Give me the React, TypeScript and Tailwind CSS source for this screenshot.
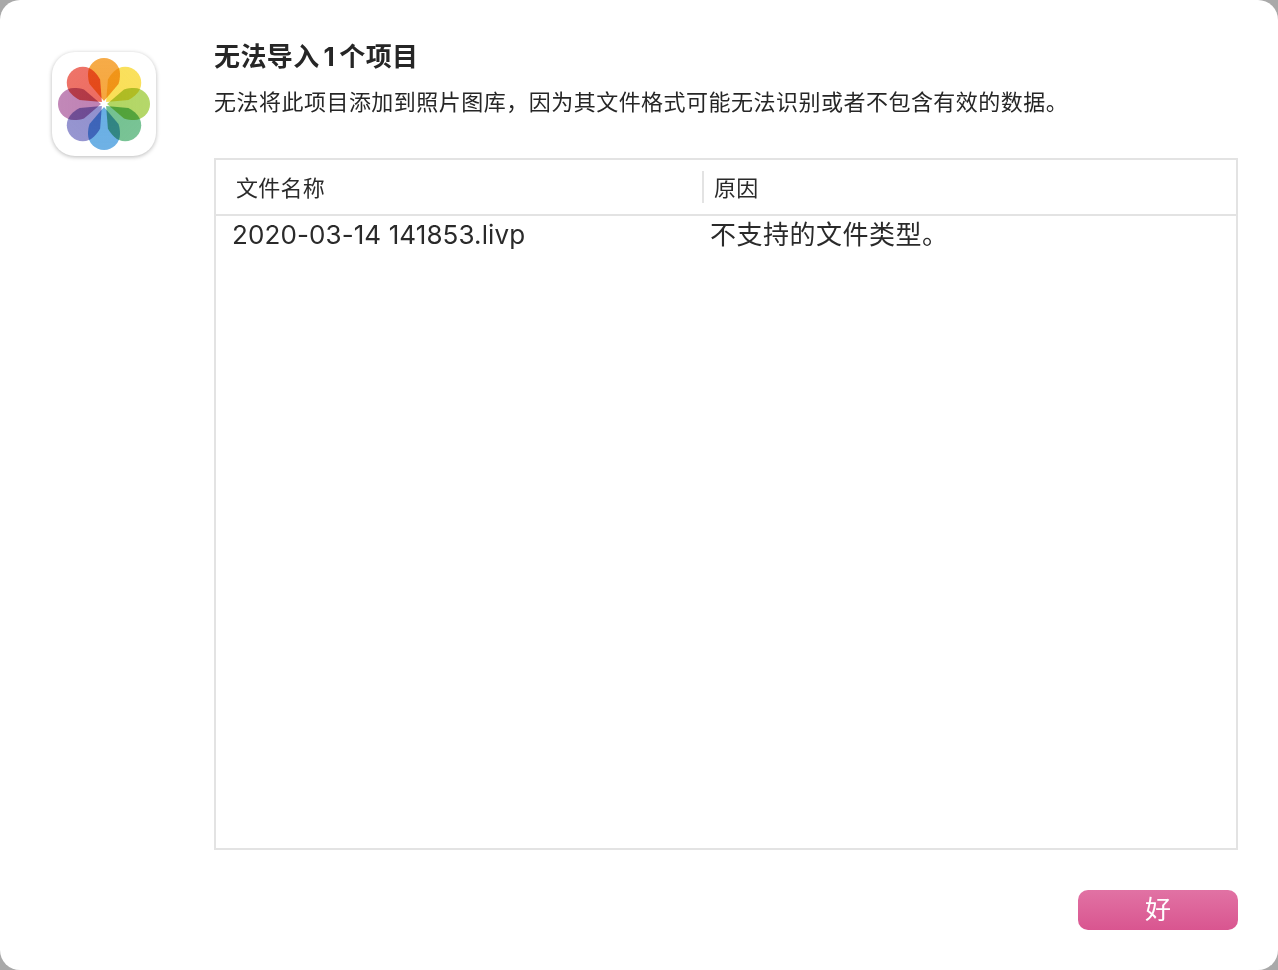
import React from 'react';

const FONT = 'font-["Inter","Noto_Sans_CJK_SC",sans-serif]';

// clockwise from the top petal
const petals = ['#f5a234', '#f9dd4c', '#add35a', '#6bbd8a', '#5fa9e2', '#8b8acb', '#bb7bb0', '#ec6458'];

function PhotosIcon() {
  return (
    <div className="w-[104px] h-[104px] shrink-0 rounded-[23px] bg-white shadow-[0_1px_4px_rgba(0,0,0,0.28)]">
      <svg width="104" height="104" viewBox="-52 -52 104 104">
        <defs>
          {petals.map((c, i) => (
            <linearGradient key={c} id={`petal${i}`} gradientUnits="userSpaceOnUse" x1="0" y1="-2" x2="0" y2="-46">
              <stop offset="0" stopColor={c} stopOpacity="0.95" />
              <stop offset="1" stopColor={c} stopOpacity="0.9" />
            </linearGradient>
          ))}
        </defs>
        {petals.map((c, i) => (
          <path
            key={c}
            className="mix-blend-multiply"
            transform={`rotate(${i * 45})`}
            fill={`url(#petal${i})`}
            d="M0 -3 L-14.5 -20 C-15.6 -23 -16 -27 -16 -30 A16 16 0 0 1 16 -30 C16 -27 15.6 -23 14.5 -20 Z"
          />
        ))}
      </svg>
    </div>
  );
}

export default function App() {
  return (
    <div className={`h-[970px] bg-[#a9a9a9] ${FONT}`}>
      <div className="h-full rounded-[20px] bg-white flex pt-[52px] pl-[52px] pr-[40px] pb-[40px] gap-[58px]">
        <PhotosIcon />
        <div className="flex-1 flex flex-col min-w-0 -mt-[52px]">
          <h1 className="mt-[40px] h-[34px] leading-[34px] text-[26px] tracking-[0.4px] font-bold text-[#262626]">
            无法导入<span className="mx-[4px]">1</span>个项目
          </h1>
          <p className="mt-[13px] h-[30px] leading-[30px] text-[22px] tracking-[0.48px] text-[#262626]">
            无法将此项目添加到照片图库，因为其文件格式可能无法识别或者不包含有效的数据。
          </p>

          <div className="mt-[41px] h-[692px] border-2 border-[#e3e3e3] flex flex-col">
            <div className="h-[56px] shrink-0 border-b-2 border-[#e3e3e3] flex items-center text-[22px] tracking-[0.25px] text-[#2a2a2a]">
              <div className="w-[486px] pl-[20px] pt-[3px]">文件名称</div>
              <div className="h-[32px] leading-[34px] border-l-2 border-[#e3e3e3] pl-[10px]">原因</div>
            </div>
            <div className="flex h-[36px] items-center text-[26px] text-[#2a2a2a]">
              <div className="w-[486px] pl-[16px] tracking-[0.1px]">2020-03-14 141853.livp</div>
              <div className="pl-[8px] tracking-[0.5px]">不支持的文件类型。</div>
            </div>
          </div>

          <div className="mt-[40px] flex justify-end">
            <button className="w-[160px] h-[40px] rounded-[10px] bg-gradient-to-b from-[#e172a4] to-[#d95590] text-white text-[26px] leading-[38px]">
              好
            </button>
          </div>
        </div>
      </div>
    </div>
  );
}
